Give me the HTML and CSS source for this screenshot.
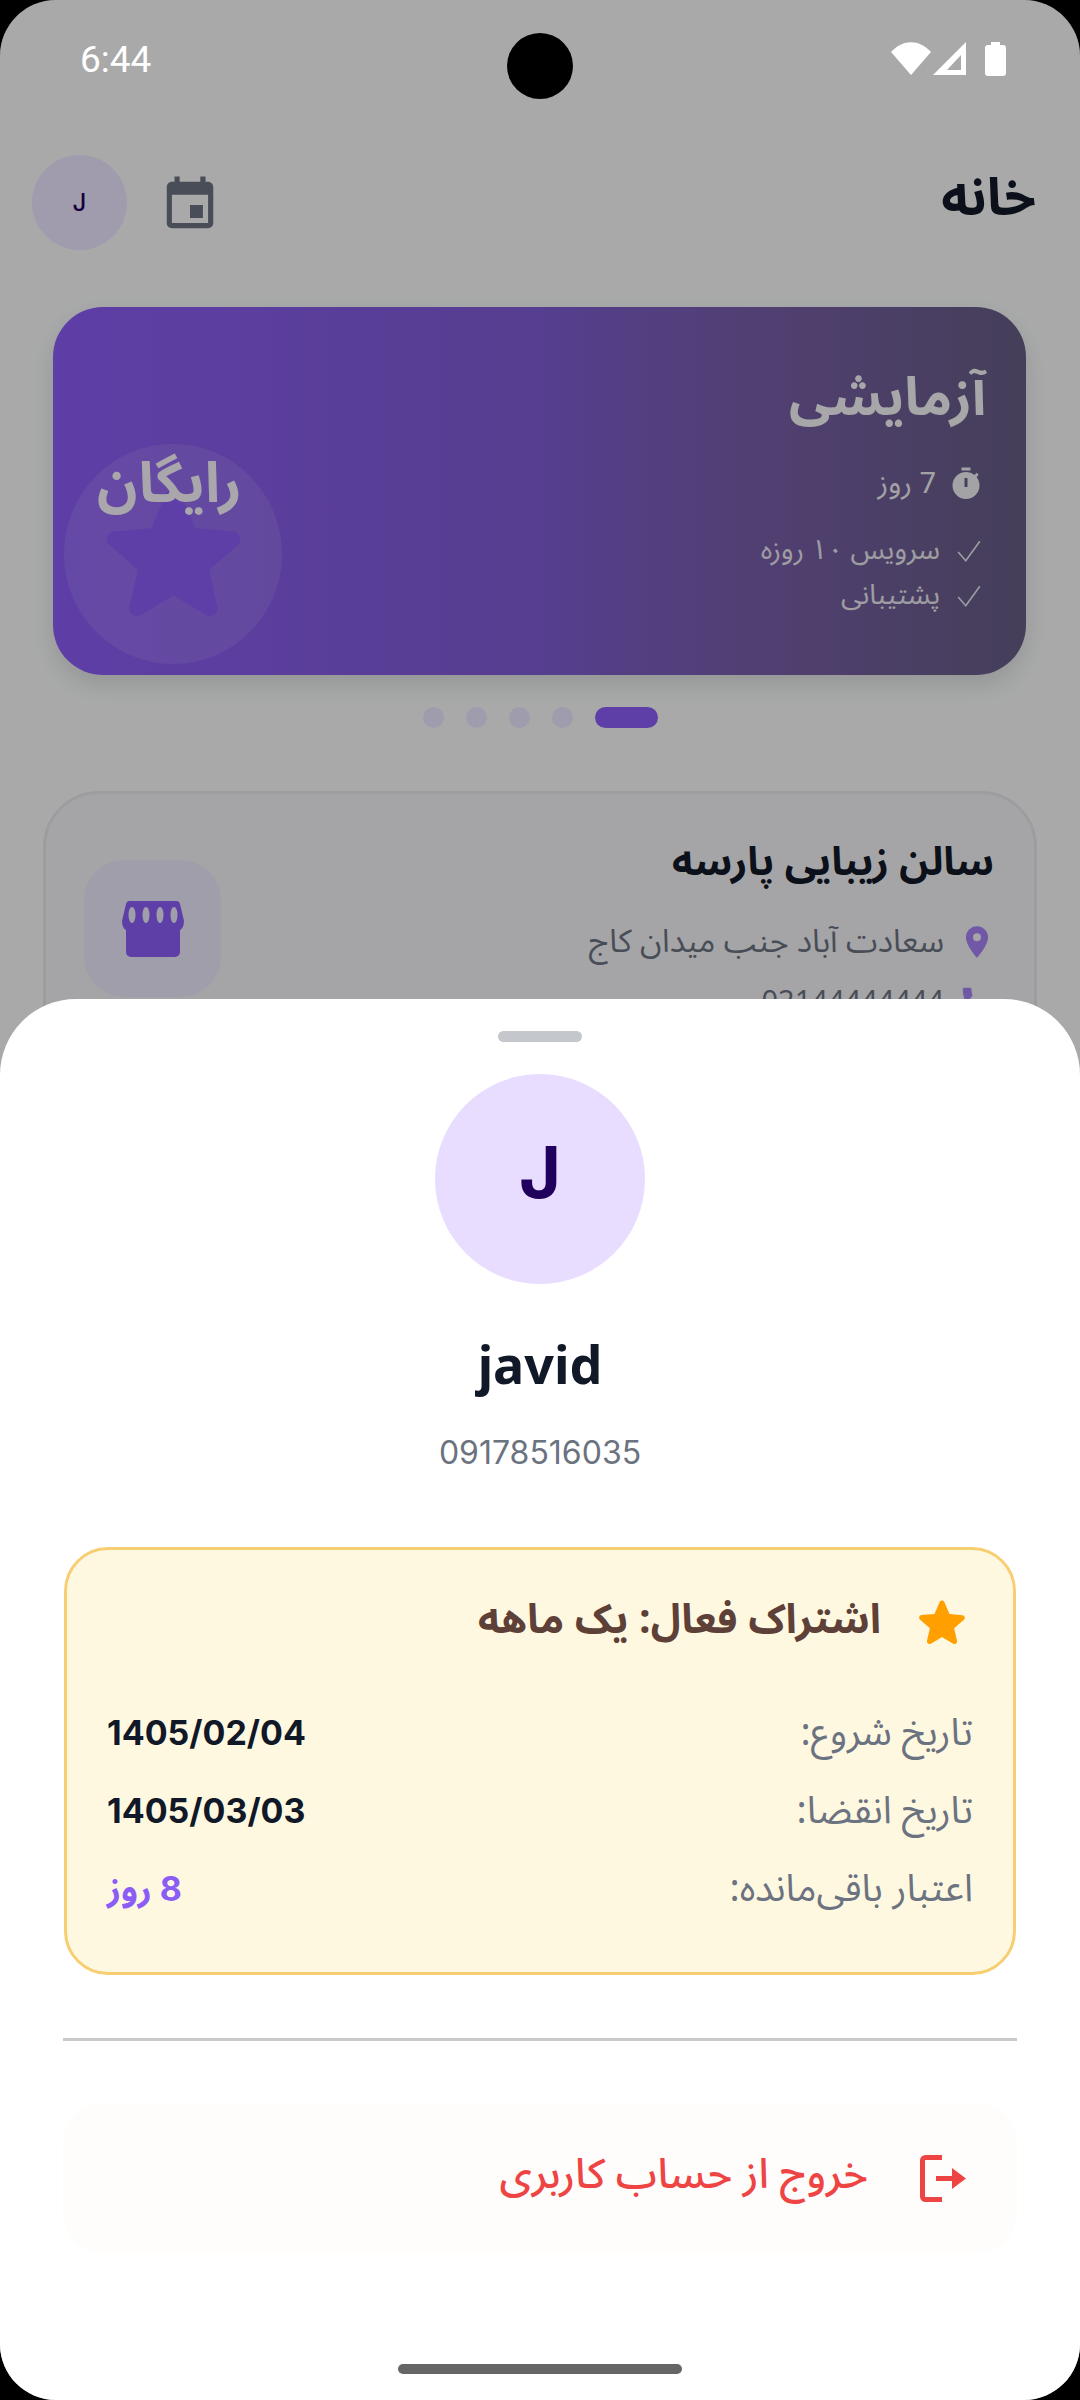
FILE: index.html
```html
<!DOCTYPE html>
<html lang="fa" dir="rtl">
<head>
<meta charset="utf-8">
<title>خانه</title>
<link rel="stylesheet" href="styles.css">
</head>
<body>
<div class="screen">
  <div class="statusbar" dir="ltr">
    <span class="time">6:44</span>
    <div class="status-icons">
      <svg class="ic-wifi" viewBox="0 0 40 33"><path d="M20 33 0 10C12-3 28-3 40 10Z"/></svg>
      <svg class="ic-signal" viewBox="0 0 33 33"><path fill-rule="evenodd" d="M33 0V33H0ZM28 13 14 28H28Z"/></svg>
      <svg class="ic-battery" viewBox="0 0 21 34"><path d="M6 0h9v3h3a3 3 0 0 1 3 3v25a3 3 0 0 1-3 3H3a3 3 0 0 1-3-3V6a3 3 0 0 1 3-3h3Z"/></svg>
    </div>
  </div>
  <div class="camera"></div>

  <header class="topbar">
    <h1 class="page-title">خانه</h1>
    <div class="top-actions">
      <svg class="ic-event" viewBox="0 0 24 24"><path d="M17 12h-5v5h5v-5zM16 1v2H8V1H6v2H5c-1.11 0-1.99.9-1.99 2L3 19c0 1.1.89 2 2 2h14c1.1 0 2-.9 2-2V5c0-1.1-.9-2-2-2h-1V1h-2zm3 18H5V8h14v11z"/></svg>
      <div class="avatar-small">J</div>
    </div>
  </header>

  <section class="plan">
    <div class="plan-info">
      <h2 class="plan-name">آزمایشی</h2>
      <div class="plan-meta">
        <svg class="ic-timer" viewBox="0 0 24 24"><path fill-rule="evenodd" d="M15 1H9v2h6V1zm-4 13h2V8h-2v6zm8.03-6.61l1.42-1.42c-.43-.51-.9-.99-1.41-1.41l-1.42 1.42C16.07 4.74 14.12 4 12 4c-4.97 0-9 4.03-9 9s4.02 9 9 9 9-4.03 9-9c0-2.12-.74-4.07-1.97-5.61z"/></svg>
        <span>7 روز</span>
      </div>
      <ul class="plan-list">
        <li><svg class="ic-check" viewBox="0 0 24 24"><path d="M2 13l7 8L22 3"/></svg><span>سرویس ۱۰ روزه</span></li>
        <li><svg class="ic-check" viewBox="0 0 24 24"><path d="M2 13l7 8L22 3"/></svg><span>پشتیبانی</span></li>
      </ul>
    </div>
    <div class="plan-badge">
      <svg class="ic-bigstar" viewBox="0 0 24 24"><path d="M12 17.27l4.15 2.51c.76.46 1.69-.22 1.49-1.08l-1.1-4.72 3.67-3.18c.67-.58.31-1.68-.57-1.75l-4.83-.41-1.89-4.46c-.34-.81-1.5-.81-1.84 0L9.19 8.63l-4.83.41c-.88.07-1.24 1.17-.57 1.75l3.67 3.18-1.1 4.72c-.2.86.73 1.54 1.49 1.08l4.15-2.5z"/></svg>
      <span class="plan-price">رایگان</span>
    </div>
  </section>

  <div class="dots" dir="ltr">
    <i class="dot"></i><i class="dot"></i><i class="dot"></i><i class="dot"></i><i class="dot active"></i>
  </div>

  <section class="shop">
    <div class="shop-info">
      <h3 class="shop-name">سالن زیبایی پارسه</h3>
      <div class="shop-line">
        <svg class="ic-pin" viewBox="0 0 24 24"><path fill-rule="evenodd" d="M12 2C8.13 2 5 5.13 5 9c0 5.25 7 13 7 13s7-7.75 7-13c0-3.87-3.13-7-7-7zm0 9.5a2.5 2.5 0 1 1 0-5 2.5 2.5 0 0 1 0 5z"/></svg>
        <span>سعادت آباد جنب میدان کاج</span>
      </div>
      <div class="shop-line">
        <svg class="ic-pin" viewBox="0 0 24 24"><path d="M6.62 10.79c1.44 2.83 3.76 5.14 6.59 6.59l2.2-2.2c.27-.27.67-.36 1.02-.24 1.12.37 2.33.57 3.57.57.55 0 1 .45 1 1V20c0 .55-.45 1-1 1-9.39 0-17-7.61-17-17 0-.55.45-1 1-1h3.5c.55 0 1 .45 1 1 0 1.25.2 2.45.57 3.57.11.35.03.74-.25 1.02l-2.2 2.2z"/></svg>
        <span class="shop-phone">02144444444</span>
      </div>
    </div>
    <div class="shop-tile">
      <svg class="ic-store" viewBox="0 0 62 56">
        <path d="M4 24H58V51a5 5 0 0 1-5 5H9a5 5 0 0 1-5-5Z"/>
        <path d="M8 0H54a4 4 0 0 1 4 3L62 20Q62 28 56 30H6Q0 28 0 20L4 3A4 4 0 0 1 8 0Z"/>
        <g class="slits"><ellipse cx="10" cy="14" rx="3.5" ry="8"/><ellipse cx="24" cy="14" rx="3.5" ry="8"/><ellipse cx="38" cy="14" rx="3.5" ry="8"/><ellipse cx="52" cy="14" rx="3.5" ry="8"/></g>
      </svg>
    </div>
  </section>

  <div class="scrim"></div>

  <aside class="sheet">
    <div class="handle"></div>
    <div class="avatar-big"><span class="avatar-letter">J</span></div>
    <div class="user-name">javid</div>
    <div class="user-phone">09178516035</div>

    <section class="sub">
      <div class="sub-head">
        <svg class="ic-substar" viewBox="0 0 24 24"><path d="M12 17.27l4.15 2.51c.76.46 1.69-.22 1.49-1.08l-1.1-4.72 3.67-3.18c.67-.58.31-1.68-.57-1.75l-4.83-.41-1.89-4.46c-.34-.81-1.5-.81-1.84 0L9.19 8.63l-4.83.41c-.88.07-1.24 1.17-.57 1.75l3.67 3.18-1.1 4.72c-.2.86.73 1.54 1.49 1.08l4.15-2.5z"/></svg>
        <span class="sub-title">اشتراک فعال: یک ماهه</span>
      </div>
      <div class="sub-row"><span class="sub-label">تاریخ شروع:</span><span class="sub-value">1405/02/04</span></div>
      <div class="sub-row"><span class="sub-label">تاریخ انقضا:</span><span class="sub-value">1405/03/03</span></div>
      <div class="sub-row"><span class="sub-label">اعتبار باقی‌مانده:</span><span class="sub-value accent">8 روز</span></div>
    </section>

    <div class="divider"></div>

    <div class="logout">
      <svg class="ic-logout" viewBox="0 0 46 47"><path class="br" d="M22 2.5H5.5a3 3 0 0 0-3 3V41.500a3 3 0 0 0 3 3H22"/><path class="ar" d="M16 21h16v-8l14 10.500L32 34v-8H16z"/></svg>
      <span class="logout-text">خروج از حساب کاربری</span>
    </div>

    <div class="homebar"></div>
  </aside>
</div>
</body>
</html>
```

FILE: styles.css
```css
* { box-sizing: border-box; }
html, body { margin: 0; padding: 0; background: #000; }
body {
  width: 1080px;
  height: 2400px;
  overflow: hidden;
  font-family: "Noto Sans Arabic", "Vazirmatn", "DejaVu Sans", "Noto Sans", sans-serif;
}
.screen {
  position: relative;
  width: 1080px;
  height: 2400px;
  overflow: hidden;
  background: #f9fafb;
  border-radius: 56px;
}
.statusbar {
  position: relative;
  z-index: 2;
  height: 110px;
  padding: 0 74px 0 80px;
  display: flex;
  justify-content: space-between;
  align-items: flex-start;
  color: #fff;
}
.time { font: 400 37px/40px Roboto, sans-serif; margin-top: 40px; }
.status-icons { display: flex; align-items: flex-start; margin-top: 42px; }
.status-icons svg { display: block; fill: #fff; }
.ic-wifi { width: 40px; height: 33px; }
.ic-signal { width: 33px; height: 33px; margin-left: 2px; }
.ic-battery { width: 21px; height: 34px; margin-left: 19px; }
.camera {
  position: absolute;
  z-index: 2;
  left: 507px;
  top: 33px;
  width: 66px;
  height: 66px;
  border-radius: 50%;
  background: #000;
}
.topbar {
  height: 197px;
  padding: 45px 44px 0 32px;
  display: flex;
  justify-content: space-between;
  align-items: flex-start;
}
.page-title { margin: 0; font-size: 52px; line-height: 88px; font-weight: 700; color: #111827; }
.top-actions { display: flex; align-items: center; gap: 32px; }
.ic-event { width: 62px; height: 62px; fill: #6b7280; display: block; margin-top: 4px; }
.avatar-small {
  width: 95px;
  height: 95px;
  border-radius: 50%;
  background: #ede6ff;
  color: #21005d;
  display: flex;
  align-items: center;
  justify-content: center;
  font: 500 24px/1 Inter, sans-serif;
}
.plan {
  margin: 0 54px 0 53px;
  height: 368px;
  border-radius: 50px;
  padding: 0 40px 11px 11px;
  display: flex;
  justify-content: space-between;
  align-items: flex-end;
  color: #fff;
  background: linear-gradient(90deg, #8b5cf6 0%, #7f5cd4 50%, #785ea9 72%, #665e84 100%);
  box-shadow: 0 10px 24px rgba(0, 0, 0, .12);
}
.plan-info { align-self: flex-start; padding-top: 59px; }
.plan-name { margin: 0; font-size: 53px; line-height: 64px; font-weight: 700; opacity: .95; }
.plan-meta { display: flex; align-items: center; gap: 12px; margin-top: 36px; font-size: 29px; line-height: 36px; opacity: .9; margin-right: 2px; }
.ic-timer { width: 36px; height: 36px; fill: #fff; display: block; }
.plan-list { list-style: none; margin: 26px 4px 0 0; padding: 0; font-size: 28px; line-height: 45px; opacity: .85; }
.plan-list li { display: flex; align-items: center; gap: 16px; }
.ic-check { width: 26px; height: 26px; fill: none; stroke: #fff; stroke-width: 1.500; display: block; }
.plan-badge {
  position: relative;
  width: 218px;
  height: 220px;
  border-radius: 50%;
  background: rgba(255, 255, 255, .1);
  display: flex;
  align-items: center;
  justify-content: center;
}
.ic-bigstar { width: 187px; height: 187px; fill: #8b5cf6; display: block; }
.plan-price {
  position: absolute;
  top: 5px;
  left: 33px;
  font-size: 56px;
  line-height: 70px;
  font-weight: 700;
  opacity: .95;
  white-space: nowrap;
}
.dots { margin-top: 32px; height: 21px; display: flex; justify-content: center; gap: 22px; }
.dot { display: block; width: 21px; height: 21px; border-radius: 50%; background: #ebe6ff; }
.dot.active { width: 63px; border-radius: 11px; background: #8b5cf6; }
.shop {
  margin: 63px 43px 0 43px;
  height: 400px;
  border: 3px solid #e5e7eb;
  border-radius: 56px;
  background: #f3f4f6;
  padding: 66px 40px 0 38px;
  display: flex;
  justify-content: space-between;
  align-items: flex-start;
}
.shop-name { margin: -25px 0 0; font-size: 40px; line-height: 56px; font-weight: 700; color: #111827; }
.shop-line { display: flex; align-items: center; gap: 14px; color: #6b7280; font-size: 32px; line-height: 40px; margin-top: 31px; margin-right: -2px; }
.shop-line + .shop-line { margin-top: 20px; }
.shop-phone { font-size: 29px; }
.ic-pin { width: 38px; height: 38px; fill: #8b5cf6; opacity: .75; display: block; }
.shop-tile {
  width: 137px;
  height: 137px;
  border-radius: 40px;
  background: #ede9fe;
  display: flex;
  align-items: center;
  justify-content: center;
}
.ic-store { width: 62px; height: 56px; fill: #8b5cf6; display: block; }
.slits ellipse { fill: #ede9fe; }
.scrim { position: absolute; z-index: 1; inset: 0; background: rgba(0, 0, 0, .32); }
.sheet {
  position: absolute;
  z-index: 3;
  left: 0;
  right: 0;
  bottom: 0;
  height: 1401px;
  background: #fff;
  border-radius: 76px 76px 0 0;
  padding: 32px 64px 0;
  display: flex;
  flex-direction: column;
  align-items: center;
}
.handle { width: 84px; height: 11px; border-radius: 6px; background: #c4c7cb; }
.avatar-big {
  margin-top: 32px;
  width: 210px;
  height: 210px;
  border-radius: 50%;
  background: #e9ddff;
  color: #21005d;
  display: flex;
  align-items: center;
  justify-content: center;
  padding-bottom: 14px;
}
.avatar-letter { font: 700 72px/1 Inter, sans-serif; }
.user-name { margin-top: 50px; font: 700 52px/60px "Noto Sans", sans-serif; color: #111827; }
.user-phone { margin-top: 39px; font: 400 32px/40px Inter, sans-serif; color: #6b7280; }
.sub {
  margin-top: 74px;
  width: 952px;
  height: 428px;
  background: #fff8e1;
  border: 3px solid #f7ce72;
  border-radius: 44px;
  padding: 38px 40px 0;
}
.sub-head { display: flex; align-items: center; gap: 29px; height: 64px; margin-bottom: 42px; margin-right: -1px; }
.ic-substar { width: 64px; height: 64px; fill: #ffa000; display: block; margin-top: 6px; }
.sub-title { font-size: 41px; line-height: 50px; font-weight: 700; color: #5d4037; }
.sub-row { display: flex; justify-content: space-between; align-items: center; height: 78px; }
.sub-label { font-size: 38px; line-height: 56px; color: #6b7280; }
.sub-value { font-family: Inter, "Noto Sans Arabic", "DejaVu Sans", sans-serif; font-size: 34px; line-height: 50px; font-weight: 700; color: #111827; direction: ltr; }
.sub-value.accent { color: #8b5cf6; direction: rtl; }
.divider { margin-top: 63px; width: 954px; height: 3px; background: #c9c9c9; }
.logout {
  margin-top: 62px;
  width: 954px;
  height: 150px;
  border-radius: 40px;
  background: #fefdfc;
  padding: 0 51px;
  display: flex;
  align-items: center;
  gap: 52px;
  color: #ef4444;
}
.logout-text { font-size: 41.500px; line-height: 56px; font-weight: 500; margin-top: -6px; }
.ic-logout { width: 46px; height: 47px; display: block; flex: none; }
.ic-logout .br { fill: none; stroke: #ef4444; stroke-width: 5; }
.ic-logout .ar { fill: #ef4444; }
.homebar { margin-top: 111px; width: 284px; height: 10px; border-radius: 5px; background: #666; }
```
